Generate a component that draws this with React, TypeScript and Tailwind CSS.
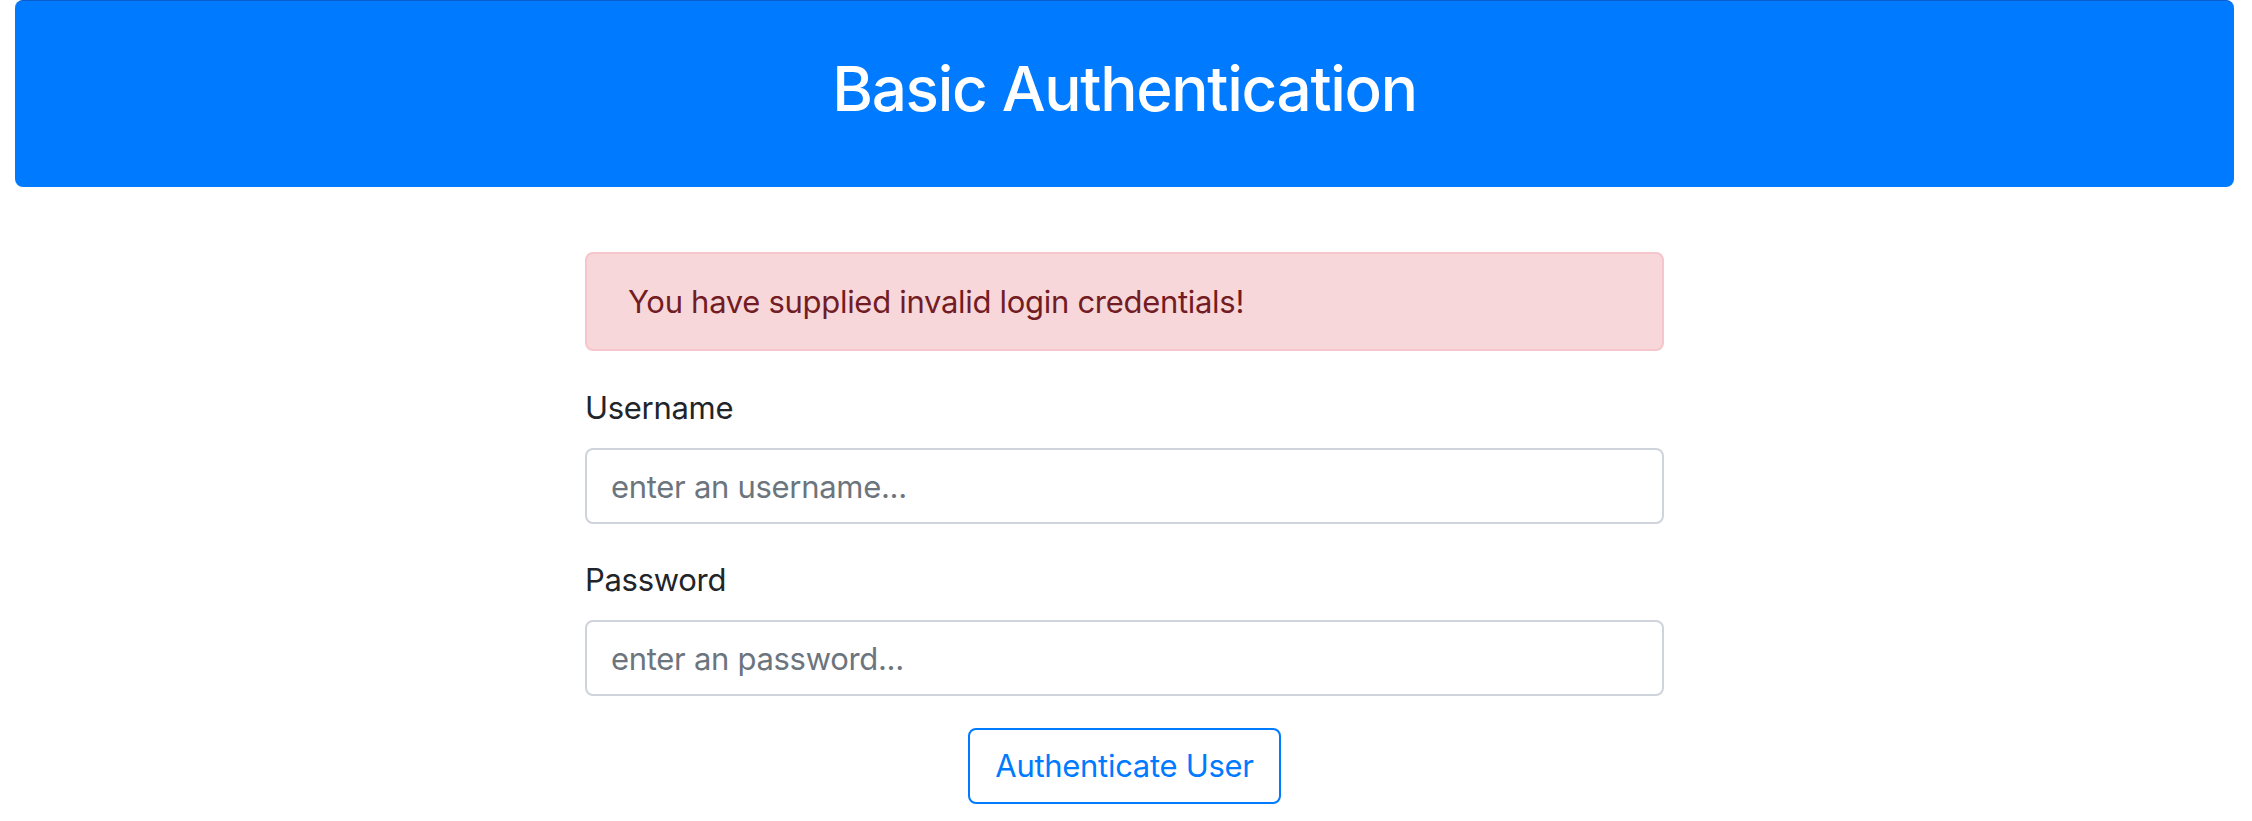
import { useState } from "react";

export default function App() {
  const [username, setUsername] = useState("");
  const [password, setPassword] = useState("");

  return (
    <div className="min-h-screen bg-white pl-[15px] pr-[18px] font-['Inter','Liberation_Sans',sans-serif] text-[#212529]">
      {/* header */}
      <div className="h-[187px] rounded-[8px] border-t border-[#0a5fcf] bg-[#007bff] pt-[50px] text-center">
        <h2 className="text-[62px] font-medium leading-[76px] tracking-[-1.3px] text-white">
          Basic Authentication
        </h2>
      </div>

      {/* form */}
      <div className="mx-auto mt-[65px] w-[1079px] text-[31px] tracking-[-0.3px]">
        <div className="flex h-[99px] items-center rounded-[8px] border-2 border-[#f5c6cb] bg-[#f8d7da] px-[41px] leading-[48px] text-[#721c24]">
          You have supplied invalid login credentials!
        </div>

        <div className="mt-[33px]">
          <label className="mb-[16px] block leading-[48px]">Username</label>
          <input
            value={username}
            onChange={(e) => setUsername(e.target.value)}
            placeholder="enter an username..."
            className="block h-[76px] w-full rounded-[8px] border-2 border-[#ced4da] bg-white px-[24px] text-[#495057] outline-none placeholder:text-[#6c757d]"
          />
        </div>

        <div className="mt-[32px]">
          <label className="mb-[16px] block leading-[48px]">Password</label>
          <input
            type="password"
            value={password}
            onChange={(e) => setPassword(e.target.value)}
            placeholder="enter an password..."
            className="block h-[76px] w-full rounded-[8px] border-2 border-[#ced4da] bg-white px-[24px] text-[#495057] outline-none placeholder:text-[#6c757d]"
          />
        </div>

        <div className="mt-[32px] flex justify-center">
          <button className="h-[76px] rounded-[8px] border-2 border-[#007bff] bg-white px-[25px] leading-[48px] text-[#007bff]">
            Authenticate User
          </button>
        </div>
      </div>
    </div>
  );
}
